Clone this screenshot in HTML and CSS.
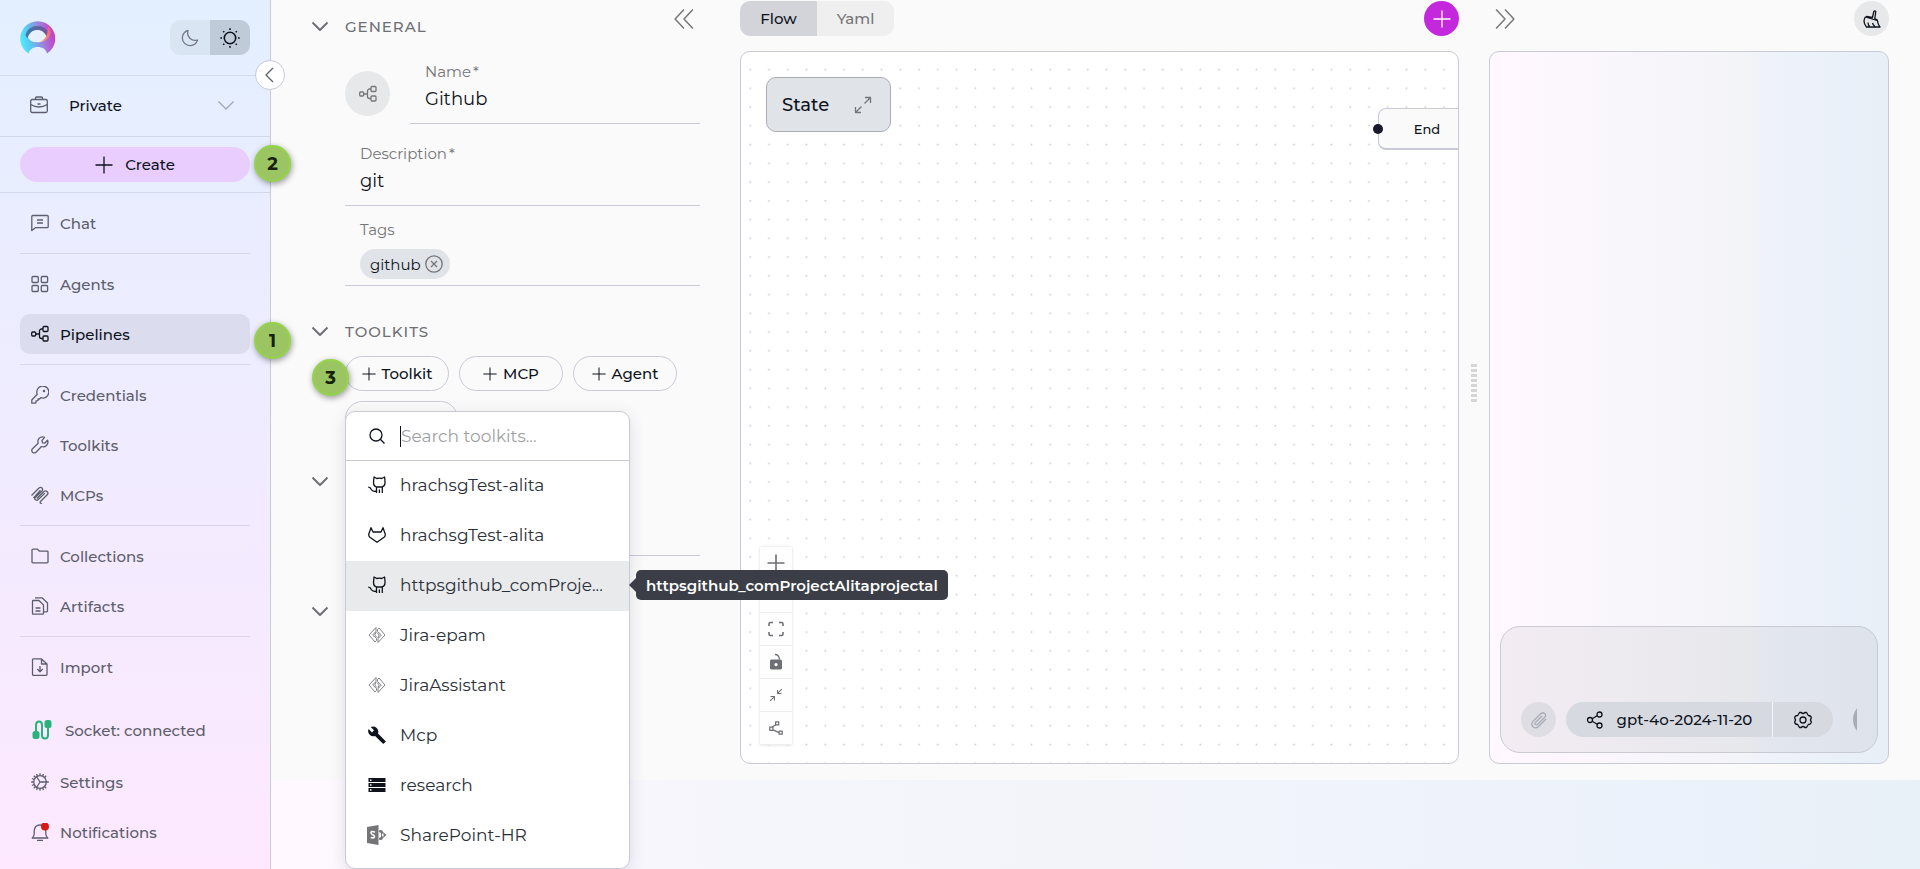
FILE: index.html
```html
<!DOCTYPE html>
<html lang="en">
  <head>
    <meta charset="UTF-8" />
    <meta name="viewport" content="width=device-width, initial-scale=1.0" />
    <title>Pipelines - Github</title>
    <link rel="stylesheet" href="styles.css">
  </head>
  <body>
    <!-- icon sprite -->
    <svg class="sprite" aria-hidden="true">
      <symbol id="i-chevron" viewBox="0 0 18 18"><path d="M1.500 5.500L9 13l7.500-7.500" /></symbol>
      <symbol id="i-plus" viewBox="0 0 18 18"><path d="M9 .5v17M.5 9h17" /></symbol>
      <symbol id="i-double" viewBox="0 0 18 18"><path d="M9 .5L1 9l8 8.500M17 .5L9 9l8 8.500" /></symbol>
      <symbol id="i-flow" viewBox="0 0 18 18">
        <rect x=".7" y="7" width="4" height="4" rx="1" /><rect x="12" y="1.500" width="5" height="5" rx="1" /><rect x="12" y="11" width="5" height="5" rx="1" />
        <path d="M4.700 9h3.800M12 4h-1.500a2 2 0 0 0-2 2v5.500a2 2 0 0 0 2 2H12" />
      </symbol>
      <symbol id="i-tool-cat" viewBox="0 0 18 18">
        <path d="M6 1l2.700 1.500q2.800-.6 5 0L16.600 1l.4 4.500q.4 4.500-3.200 5.500H8.500Q5 10 5.600 5.500zM8.500 11v6M14.300 11v6M11.400 13.500V17M8.500 15q-4 1-5.200-1.500-.8-2-3-2.300" />
      </symbol>
      <symbol id="i-fox" viewBox="0 0 18 18"><path d="M3 1.700L5 6h8l2-4.300L17.200 8q.3 2-.8 3L9 16.300 1.600 11Q.5 10 .8 8z" /></symbol>
      <symbol id="i-jira" viewBox="0 0 18 18">
        <path d="M8 1.500L1 9l6 7 1.500-1.500v-2L4.700 9 8 5.300zM10 16.500L17 9l-6-7-1.500 1.500v2L13.300 9 10 12.700zM8 6L6.800 9l2 2.500M10 12l1.200-3-2-2.500" />
      </symbol>
      <symbol id="i-share" viewBox="0 0 18 18">
        <circle cx="4" cy="9" r="2.500" /><circle cx="13.500" cy="3.500" r="2.500" /><circle cx="13.500" cy="14.500" r="2.500" /><path d="M6.200 7.800l5-3M6.200 10.200l5 3" />
      </symbol>
    </svg>

    <aside class="sidebar">
      <header class="sidebar-top">
        <svg class="logo" viewBox="0 0 35 35" aria-hidden="true">
          <defs>
            <linearGradient id="ring" x1="0" y1=".7" x2="1" y2=".5">
              <stop offset="0" stop-color="#4df0ff" /><stop offset=".3" stop-color="#5cc4f0" /><stop offset=".65" stop-color="#a07ddc" /><stop offset="1" stop-color="#c83bc4" />
            </linearGradient>
            <linearGradient id="shade" x1="0" y1="0" x2="1" y2="0">
              <stop offset="0" stop-color="#3a7fa8" /><stop offset="1" stop-color="#7c4f9c" />
            </linearGradient>
            <linearGradient id="flare" x1="0" y1="1" x2="1" y2="0">
              <stop offset="0" stop-color="#ffb25c" /><stop offset="1" stop-color="#f0528c" />
            </linearGradient>
          </defs>
          <path fill="url(#ring)" d="M8.500 33.500A17.500 17.500 0 1 1 27 33.500C26 29 22 27 17.700 27S10 29 8.500 33.500z" />
          <ellipse cx="17.500" cy="16" rx="10" ry="6.300" fill="#e6f0ff" />
          <path fill="url(#shade)" d="M5.500 15.500C7 8.500 12 6 17.500 6S28 8.500 28.500 15.500L27 17.500c-2-5-5-7.500-9.500-7.500S9 12.500 7.500 18.500z" />
          <path fill="url(#flare)" d="M18 22.300c7-1 10-7 10-16 2.500 2 3 4 2.800 6C30 18.500 24 22.500 18 22.300z" />
        </svg>
        <div class="theme" role="group" aria-label="Theme">
          <button type="button" aria-label="Dark">
            <svg class="icon" viewBox="0 0 18 18"><path d="M7 1.500A7.700 7.700 0 1 0 16.500 11 7.500 7.500 0 0 1 7 1.500z" /></svg>
          </button>
          <button type="button" class="on" aria-label="Light">
            <svg class="icon icon-20 bold" viewBox="0 0 20 20"><circle cx="10" cy="10" r="5.700" /><path d="M10 .3v1.700M10 18v1.700M.3 10H2M18 10h1.700M3.200 3.200l1.100 1.100M15.700 15.700l1.100 1.100M3.200 16.800l1.100-1.100M15.700 4.300l1.100-1.100" /></svg>
          </button>
        </div>
        <button type="button" class="collapse" aria-label="Collapse sidebar">
          <svg class="icon" viewBox="0 0 18 18"><path d="M12 2L5 9l7 7" /></svg>
        </button>
      </header>

      <button type="button" class="project">
        <svg class="icon" viewBox="0 0 18 18"><rect x=".7" y="3.500" width="16.600" height="13" rx="1.500" /><path d="M5.500 3.500V2q0-1 1-1h5q1 0 1 1v1.500M.7 8.500Q9 13.500 17.300 8.500M7.500 8h3" /></svg>
        <span>Private</span>
        <svg class="icon faded"><use href="#i-chevron" /></svg>
      </button>

      <div class="create-row">
        <button type="button" class="create"><svg class="icon"><use href="#i-plus" /></svg>Create</button>
        <span class="step">2</span>
      </div>

      <nav class="menu">
        <a href="#chat"><svg class="icon" viewBox="0 0 18 18"><path d="M.8 16.500v-14q0-1 1-1h14.400q1 0 1 1v10.200q0 1-1 1H4.500zM6 6h6M6 9h6" /></svg>Chat</a>
        <hr>
        <a href="#agents"><svg class="icon" viewBox="0 0 18 18"><rect x="1" y="1.500" width="6.300" height="6" rx="1" /><rect x="10.300" y="1.500" width="6.300" height="6" rx="1" /><rect x="1" y="10.500" width="6.300" height="6" rx="1" /><rect x="10.300" y="10.500" width="6.300" height="6" rx="1" /></svg>Agents</a>
        <a href="#pipelines" class="active"><svg class="icon"><use href="#i-flow" /></svg>Pipelines<span class="step step-side">1</span></a>
        <hr>
        <a href="#credentials"><svg class="icon" viewBox="0 0 18 18"><path d="M.8 14L6.200 8.200A6 6 0 1 1 9.800 11.700L8.500 13H7v1.500L5.500 15H5v1.500l-.7.700H.8z" /><circle cx="13" cy="5" r=".6" /></svg>Credentials</a>
        <a href="#toolkits"><svg class="icon" viewBox="0 0 18 18"><path d="M13.500 1.300q-3-1.300-5.300.9-2 2.200-1 5L1.500 12.700q-1.500 1.800 0 3.500 1.700 1.500 3.500 0l5.500-5.700q3 1 5-1 2.200-2.500 1.100-5.300l-3 3-2-.4-.7-2.200z" /></svg>Toolkits</a>
        <a href="#mcps"><svg class="icon" viewBox="0 0 18 18"><path d="M.5 9.500L8 2q1.700-1.300 3 0t0 3L4.500 11.300M5.800 12.500L13 5.500q1.700-1.200 3.200.2t0 3.100L9.500 15.500q-.8 1 0 1.500l1.500 1.200M4.500 11.300q-1.500 1.500 0 2.500t2.500 0l7-6.700M2.500 12L9.500 4.300" /></svg>MCPs</a>
        <hr>
        <a href="#collections"><svg class="icon" viewBox="0 0 18 18"><path d="M1 3q0-.8.800-.8h4.700l2 2h7.700q.8 0 .8.8v10q0 .8-.8.8H1.800q-.8 0-.8-.8z" /></svg>Collections</a>
        <a href="#artifacts"><svg class="icon" viewBox="0 0 18 18"><path d="M1.500 4.300q0-.8.800-.8H8l4.500 4.500v8.400q0 .8-.8.800H2.300q-.8 0-.8-.8zM4 .8h7L16.500 6v8q0 .8-.8.8h-3M4.500 11h5M4.500 14h5" /></svg>Artifacts</a>
        <hr>
        <a href="#import"><svg class="icon" viewBox="0 0 18 18"><path d="M1.500 1.700q0-.8.800-.8h8.200l5.500 5v10.600q0 .8-.8.800H2.300q-.8 0-.8-.8zM10.500.8V6H16M9 8v5.500M6.300 11L9 13.800l2.700-2.800" /></svg>Import</a>
      </nav>

      <div class="menu menu-bottom">
        <p class="socket">
          <svg class="icon icon-20" viewBox="0 0 20 20"><path d="M4 15V5q0-3.500 3-3.500T10 5v10q0 3.500 3 3.500t3-3.500V5" /><rect x="1.500" y="12" width="5" height="6" rx="1.500" /><rect x="13.500" y="1" width="5" height="6" rx="1.500" /></svg>
          Socket: connected
        </p>
        <a href="#settings"><svg class="icon" viewBox="0 0 18 18"><circle cx="9" cy="9" r="6.300" /><path d="M9 .2v2.500M9 15.300v2.500M.2 9h2.500M8.500 9h9.300M2.800 2.800l1.700 1.700M13.500 13.500l1.700 1.700M2.800 15.200l1.700-1.700M13.500 4.500l1.700-1.700M9 9L5.500 3.500M9 9l-3.500 5.500M5.500.9l1 2.300M11.500 14.800l1 2.300M.9 5.500l2.300 1M.9 12.500l2.300-1M12.500.9l-1 2.300M5.500 17.100l1-2.300" /></svg>Settings</a>
        <a href="#notifications"><svg class="icon" viewBox="0 0 18 18"><path d="M1.200 15q2-1.500 2-4.500V8Q3.500 2 9 2t5.800 6v2.500q0 3 2 4.500zM6 17.300h6" /><circle class="alert" cx="14" cy="3.500" r="4" /></svg>Notifications</a>
      </div>
    </aside>

    <main class="workspace">
      <section class="settings">
        <button type="button" class="ghost fold" aria-label="Collapse settings"><svg class="icon icon-20"><use href="#i-double" /></svg></button>

        <button type="button" class="heading"><svg class="icon"><use href="#i-chevron" /></svg>GENERAL</button>
        <div class="fields">
          <div class="name-row">
            <span class="avatar"><svg class="icon"><use href="#i-flow" /></svg></span>
            <div class="field">
              <label for="name">Name <i>*</i></label>
              <input id="name" type="text" value="Github">
            </div>
          </div>
          <div class="field">
            <label for="description">Description <i>*</i></label>
            <input id="description" type="text" value="git">
          </div>
          <div class="field field-tags">
            <span class="label">Tags</span>
            <span class="tag">github<button type="button" aria-label="Remove github"><svg class="icon" viewBox="0 0 18 18"><circle cx="9" cy="9" r="8.200" /><path d="M6 6l6 6M12 6l-6 6" /></svg></button></span>
          </div>
        </div>

        <button type="button" class="heading"><svg class="icon"><use href="#i-chevron" /></svg>TOOLKITS</button>
        <div class="fields add-row">
          <button type="button" class="add"><svg class="icon icon-14"><use href="#i-plus" /></svg>Toolkit</button>
          <button type="button" class="add"><svg class="icon icon-14"><use href="#i-plus" /></svg>MCP</button>
          <button type="button" class="add"><svg class="icon icon-14"><use href="#i-plus" /></svg>Agent</button>
          <button type="button" class="add add-wide" aria-label="Pipeline"></button>
          <span class="step step-toolkit">3</span>

          <div class="picker">
            <label class="search">
              <svg class="icon" viewBox="0 0 18 18"><circle cx="8" cy="8" r="6" /><path d="M12.300 12.300L16.500 16.500" /></svg>
              <input type="text" placeholder="Search toolkits..." aria-label="Search toolkits">
            </label>
            <ul>
              <li><svg class="icon"><use href="#i-tool-cat" /></svg><span>hrachsgTest-alita</span></li>
              <li><svg class="icon"><use href="#i-fox" /></svg><span>hrachsgTest-alita</span></li>
              <li class="hover">
                <svg class="icon"><use href="#i-tool-cat" /></svg><span>httpsgithub_comProje...</span>
                <div class="tooltip" role="tooltip">httpsgithub_comProjectAlitaprojectal</div>
              </li>
              <li><svg class="icon thin muted"><use href="#i-jira" /></svg><span>Jira-epam</span></li>
              <li><svg class="icon thin muted"><use href="#i-jira" /></svg><span>JiraAssistant</span></li>
              <li><svg class="icon solid" viewBox="0 0 18 18"><path d="M17.700 15.200L10 7.500q1-3.200-1.300-5.500Q6-.3 2.700 1L6 4.300 4 6.400.6 3Q-.8 6.200 1.700 8.800q2.300 2.200 5.400 1.200l7.700 7.600q.5.500 1 0l2-1.800q.5-.4-.1-.6z" /></svg><span>Mcp</span></li>
              <li><svg class="icon solid" viewBox="0 0 18 18"><path d="M.5 2h17v4H.5zM.5 7h17v4H.5zM.5 12h17v4H.5z" /><path class="hole" d="M2 3.500h1.500V5H2zM2 8.300h1.500v1.500H2zM2 13.200h1.500v1.500H2z" /></svg><span>research</span></li>
              <li>
                <svg class="icon icon-20 solid muted" viewBox="0 0 20 20"><path d="M0 2l11.500-2v20L0 18zM12 5.500q3.500-1.500 4 1.500l3.500 3-3.500 3q-.5 3-4 1.500v-1.500l2-1v-4l-2-1z" /><path class="hole" d="M15 8.500h1.500v3H15z" /><path class="sharp" d="M8 7.200q-3.800-1.500-4 .5 0 1.300 1.800 2t1.700 2q-.3 1.800-3.800.8" /></svg>
                <span>SharePoint-HR</span>
              </li>
            </ul>
          </div>
        </div>

        <button type="button" class="heading" aria-label="Welcome message"><svg class="icon"><use href="#i-chevron" /></svg></button>
        <div class="message-line"></div>
        <button type="button" class="heading" aria-label="Conversation starters"><svg class="icon"><use href="#i-chevron" /></svg></button>
      </section>

      <section class="editor">
        <div class="bar">
          <div class="tabs">
            <button type="button" class="on">Flow</button>
            <button type="button">Yaml</button>
          </div>
          <button type="button" class="round accent" aria-label="Add node"><svg class="icon"><use href="#i-plus" /></svg></button>
        </div>
        <div class="canvas">
          <svg class="dots" aria-hidden="true">
            <defs>
              <pattern id="grid" x="0" y="8" width="18.750" height="18.750" patternUnits="userSpaceOnUse"><circle cx="9.300" cy="9.500" r=".9" /></pattern>
            </defs>
            <rect width="100%" height="100%" fill="url(#grid)" />
          </svg>
          <button type="button" class="state">State
            <svg class="icon" viewBox="0 0 18 18"><path d="M10.500 7.500L16.500 1.500M11 1.500h5.500V7M7.500 10.500L1.500 16.500M1.500 11v5.500H7" /></svg>
          </button>
          <div class="node-end">End</div>
          <div class="controls">
            <button type="button" aria-label="Zoom in"><svg class="icon bold"><use href="#i-plus" /></svg></button>
            <button type="button" aria-label="Zoom out"></button>
            <button type="button" aria-label="Fit view"><svg class="icon bold" viewBox="0 0 18 18"><path d="M2 6V4q0-1.500 1.500-1.500H6M12 2.500h2.500Q16 2.500 16 4v2M16 12v2q0 1.500-1.500 1.500H12M6 15.500H3.500Q2 15.500 2 14v-2" /></svg></button>
            <button type="button" aria-label="Lock"><svg class="icon" viewBox="0 0 18 18"><path d="M8 1.500q4 0 4.500 5" /><path class="fill" fill-rule="evenodd" d="M3 8q0-1.500 1.500-1.500h9Q15 6.500 15 8v7q0 1.500-1.500 1.500h-9Q3 16.500 3 15zM9 10a1.600 1.600 0 1 0 .1 0z" /></svg></button>
            <button type="button" aria-label="Collapse nodes"><svg class="icon icon-14" viewBox="0 0 18 18"><path d="M16.500 1.500L11 7M11 2.500V7h5M1.500 16.500L7 11M2 11h5v5" /></svg></button>
            <button type="button" aria-label="Layout"><svg class="icon icon-14 bold" viewBox="0 0 18 18"><rect x="8.500" y="1" width="4" height="4" /><rect x="1" y="8" width="4" height="4" /><rect x="13" y="13" width="4" height="4" /><path d="M4 8l5-3.500M5 11.500l8 3.500" /></svg></button>
          </div>
        </div>
      </section>

      <div class="resizer" aria-hidden="true"></div>

      <section class="chat">
        <div class="bar">
          <button type="button" class="ghost flip" aria-label="Collapse chat"><svg class="icon icon-20"><use href="#i-double" /></svg></button>
          <button type="button" class="round" aria-label="Clear chat"><svg class="icon" viewBox="0 0 18 18"><path d="M9.500 7.500l1.300-6q1-1.300 2 0l-1 7 2.500 1.500q.3 4 2.700 7H3.500Q-.5 12.500 2 7.500l1.500-1zM2.500 7L14 10.500M5 12.500q0 2 1.500 4M9.500 13q.5 2 2.500 3.500" /></svg></button>
        </div>
        <div class="conversation">
          <div class="composer">
            <div class="composer-row">
              <button type="button" class="attach" aria-label="Attach file"><svg class="icon" viewBox="0 0 18 18"><path d="M16 8l-7.500 7.500q-3 2.500-5.500.3-2.500-2.600 0-5.500L11 2.500q2-1.500 3.700 0t0 3.700L7.500 13.500q-1 .7-2 0t0-2L12 5" /></svg></button>
              <div class="model">
                <button type="button" class="model-name"><svg class="icon"><use href="#i-share" /></svg>gpt-4o-2024-11-20</button>
                <button type="button" class="model-settings" aria-label="Model settings"><svg class="icon" viewBox="0 0 18 18"><circle cx="9" cy="9" r="3" /><path d="M5.500 1.500h1.700Q9 3.500 10.800 1.500h1.700l1.800 3q2.700.2 2.900 1.800v1.200q-1.500 1.500 0 3v1.200q-.4 1.700-2.900 1.800l-1.800 3h-1.700Q9 14.500 7.200 16.500H5.500l-1.800-3Q1 13.300.8 11.700v-1.200q1.500-1.500 0-3V6.300Q1 4.600 3.700 4.500z" /></svg></button>
              </div>
              <button type="button" class="send" aria-label="Send"></button>
            </div>
          </div>
        </div>
      </section>
    </main>
  </body>
</html>
```
FILE: styles.css
```css
* {
  box-sizing: border-box;
}
body {
  margin: 0;
  min-height: 100vh;
  display: flex;
  font-family: Montserrat, Inter, sans-serif;
  font-size: 15px;
  color: #0e131d;
  background: linear-gradient(90deg, #fff8ff 14%, #f5f5fc 40%, #f3f4fa 58%, #eff3fc 72%, #e8f0f8 100%);
}
button,
input {
  font: inherit;
  color: inherit;
  border: 0;
  padding: 0;
  background: none;
}
button {
  cursor: pointer;
  display: flex;
  align-items: center;
  justify-content: center;
}
.sprite {
  position: absolute;
  width: 0;
  height: 0;
}
.icon {
  flex: none;
  width: 18px;
  height: 18px;
  fill: none;
  stroke: currentColor;
  stroke-width: 1.3;
  stroke-linejoin: round;
}
.icon-20 {
  width: 20px;
  height: 20px;
}
.icon-14 {
  width: 14px;
  height: 14px;
}
.thin {
  stroke-width: 0.9;
}
.bold {
  stroke-width: 1.6;
}
.muted {
  color: #757578;
}
.faded {
  opacity: 0.5;
}
.solid,
.fill {
  fill: currentColor;
  stroke: none;
}
.hole {
  fill: #fff;
}
.sharp {
  fill: none;
  stroke: #fff;
  stroke-width: 1.6;
}

/* sidebar */
.sidebar {
  flex: none;
  width: 271px;
  display: flex;
  flex-direction: column;
  color: #5c5e6b;
  background: linear-gradient(180deg, #e3efff, #fde8ff);
  border-right: 1px solid #c9cad8;
}
.sidebar-top {
  position: relative;
  display: flex;
  align-items: center;
  justify-content: space-between;
  height: 76px;
  padding: 0 20px;
  border-bottom: 1px solid #d0dcec;
}
.logo {
  width: 35px;
  height: 35px;
}
.theme {
  display: flex;
  border-radius: 10px;
  overflow: hidden;
  background: #dae5f4;
}
.theme button {
  width: 40px;
  height: 35px;
  color: #757a88;
}
.theme .on {
  color: #0e131d;
  background: #c0cbda;
}
.collapse {
  position: absolute;
  right: -15px;
  bottom: -15px;
  z-index: 2;
  width: 30px;
  height: 30px;
  border: 1px solid #c9cad8;
  border-radius: 50%;
  background: #fff;
}
.project {
  height: 61px;
  padding: 0 35px 2px 30px;
  gap: 21px;
  border-bottom: 1px solid #d0d8ea;
}
.project span {
  flex: 1;
  text-align: left;
  color: #0e131d;
  font-weight: 500;
}
.create-row {
  position: relative;
  padding: 10px 20px;
  border-bottom: 1px solid #d0d8ea;
}
.create {
  width: 100%;
  height: 35px;
  gap: 12px;
  border-radius: 18px;
  color: #0e131d;
  font-weight: 500;
  background: #eacdff;
}
.menu {
  display: flex;
  flex-direction: column;
  gap: 10px;
  padding: 10px 20px;
}
.menu a,
.socket {
  position: relative;
  display: flex;
  align-items: center;
  gap: 11px;
  height: 40px;
  margin: 0;
  padding: 0 11px;
  border-radius: 10px;
  color: inherit;
  font-weight: 500;
  text-decoration: none;
}
.menu .active {
  color: #0e131d;
  background: #dbdcee;
}
.menu hr {
  width: 100%;
  margin: 0;
  border: 0;
  border-top: 1px solid #dad6e8;
}
.menu-bottom {
  margin-top: auto;
  padding-bottom: 17px;
}
.menu .socket {
  gap: 13px;
  margin-bottom: 2px;
  padding-left: 12px;
}
.socket .icon {
  color: #2ab27b;
  stroke-width: 2;
}
.socket rect {
  fill: currentColor;
}
.alert {
  fill: #d71616;
  stroke: none;
}

/* numbered markers */
.step {
  position: absolute;
  right: -21px;
  top: 8px;
  z-index: 3;
  display: flex;
  align-items: center;
  justify-content: center;
  width: 37px;
  height: 37px;
  border: 2px solid #94d448;
  border-radius: 50%;
  color: #16200c;
  font-size: 18px;
  font-weight: 700;
  background: #9bc563;
  box-shadow: 1px 2px 6px rgba(0, 0, 0, 0.4);
}
.step-side {
  right: -41px;
}
.step-toolkit {
  left: -33px;
  top: 3px;
}

/* workspace */
.workspace {
  flex: 1;
  min-width: 0;
  display: flex;
  margin-bottom: 89px;
  padding: 1px 31px 16px 40px;
  background: #fafafa;
}
.bar {
  display: flex;
  align-items: center;
  justify-content: space-between;
  height: 35px;
  margin-bottom: 15px;
}
.ghost {
  width: 33px;
  height: 35px;
  color: #757578;
}
.round {
  width: 35px;
  height: 35px;
  border-radius: 50%;
  background: #e7e8ea;
}
.accent {
  color: #fff;
  background: #c428dd;
}

/* settings form */
.settings {
  position: relative;
  z-index: 1;
  flex: none;
  width: 389px;
}
.fold {
  position: absolute;
  top: 0;
  right: 0;
}
.heading {
  gap: 16px;
  height: 50px;
  color: #6e6f75;
  font-weight: 500;
  letter-spacing: 1px;
}
.heading .icon {
  stroke-width: 2;
}
.fields {
  padding-left: 34px;
}
.name-row {
  display: flex;
  align-items: center;
  gap: 20px;
}
.name-row .field {
  flex: 1;
}
.avatar {
  display: flex;
  align-items: center;
  justify-content: center;
  width: 45px;
  height: 45px;
  margin-top: 12px;
  border-radius: 50%;
  color: #757578;
  background: #e7e8ea;
}
.field {
  display: flex;
  flex-direction: column;
  height: 82px;
  padding: 20px 15px 0;
  border-bottom: 1px solid #c9cad8;
}
.name-row .field {
  height: 73px;
  padding-top: 11px;
}
.field label,
.label {
  line-height: 20px;
  color: #757578;
}
.field i {
  margin-left: -2px;
  font-style: normal;
}
.field input {
  height: 34px;
  font-size: 18px;
  outline: 0;
}
.field-tags {
  height: 80px;
  padding-top: 14px;
  align-items: flex-start;
}
.tag {
  display: flex;
  align-items: center;
  gap: 4px;
  height: 30px;
  margin-top: 9px;
  padding: 0 7px 0 10px;
  border-radius: 15px;
  background: #e0e3e8;
}
.tag button {
  color: #757578;
}
.fields + .heading {
  margin-top: 20px;
}
.add-row {
  position: relative;
  display: flex;
  flex-wrap: wrap;
  gap: 10px;
  margin-left: 34px;
  padding-left: 0;
}
.add {
  width: 104px;
  height: 35px;
  gap: 6px;
  border: 1px solid #c9cad8;
  border-radius: 18px;
  font-weight: 500;
}
.add-wide {
  width: 113px;
}
.message-line {
  height: 50px;
  margin: 0 0 30px 34px;
  border-bottom: 1px solid #c9cad8;
}

/* toolkit picker */
.picker {
  position: absolute;
  top: 55px;
  left: 0;
  z-index: 2;
  width: 285px;
  padding-bottom: 7px;
  border: 1px solid #c9cad8;
  border-radius: 10px;
  background: #fff;
  box-shadow: 0 4px 16px rgba(60, 60, 90, 0.15);
}
.search {
  display: flex;
  align-items: center;
  gap: 14px;
  height: 49px;
  padding: 0 22px;
  border-bottom: 1px solid #c9cad8;
}
.search input {
  flex: 1;
  min-width: 0;
  height: 21px;
  border-left: 1px solid #0e131d;
  font-size: 17px;
  outline: 0;
}
.search input::placeholder {
  color: #a0a0a4;
}
.picker ul {
  margin: 0;
  padding: 0;
  list-style: none;
}
.picker li {
  position: relative;
  display: flex;
  align-items: center;
  gap: 14px;
  height: 50px;
  padding: 0 20px 2px 22px;
  color: #2b2f39;
  font-size: 17px;
  white-space: nowrap;
}
.picker li .icon:not(.muted) {
  color: #0e131d;
}
.picker li > .icon-20 {
  margin: 0 -1px;
}
.picker .hover {
  background: #e9eaeb;
}
.tooltip {
  position: absolute;
  left: calc(100% + 7px);
  top: 9px;
  display: flex;
  align-items: center;
  height: 30px;
  padding: 0 10px;
  border-radius: 5px;
  color: #fff;
  font-size: 15px;
  font-weight: 600;
  background: #3b3e46;
}
.tooltip::before {
  content: "";
  position: absolute;
  left: -7px;
  top: 8px;
  border: 7px solid transparent;
  border-left: 0;
  border-right-color: #3b3e46;
}

/* flow editor */
.editor {
  flex: 1;
  min-width: 0;
  display: flex;
  flex-direction: column;
  margin-left: 40px;
}
.tabs {
  display: flex;
  border-radius: 10px;
  overflow: hidden;
  background: #efefef;
}
.tabs button {
  width: 77px;
  height: 35px;
  color: #757578;
  font-weight: 500;
}
.tabs .on {
  color: #0e131d;
  background: #d3d4d9;
}
.canvas {
  position: relative;
  flex: 1;
  overflow: hidden;
  border: 1px solid #c9cad8;
  border-radius: 10px;
  background: #fff;
}
.dots {
  display: block;
  position: absolute;
  width: 100%;
  height: 100%;
  fill: #cacad0;
}
.state {
  position: absolute;
  left: 25px;
  top: 25px;
  width: 125px;
  height: 55px;
  justify-content: space-between;
  padding: 0 18px 0 15px;
  border: 1px solid #a9acb5;
  border-radius: 10px;
  font-size: 18px;
  font-weight: 500;
  background: #e0e3e8;
}
.state .icon {
  color: #757578;
}
.node-end {
  position: absolute;
  right: -18px;
  top: 56px;
  width: 98px;
  height: 42px;
  border: 1px solid #c9cad8;
  border-bottom-width: 2px;
  border-radius: 8px;
  font-size: 13px;
  font-weight: 500;
  line-height: 40px;
  text-align: center;
  background: #fafafa;
}
.node-end::before {
  content: "";
  position: absolute;
  left: -6px;
  top: 15px;
  width: 10px;
  height: 10px;
  border-radius: 50%;
  background: #1a1a2e;
}
.controls {
  position: absolute;
  left: 19px;
  bottom: 18px;
  width: 32px;
  background: #fefefe;
  box-shadow: 0 0 3px rgba(0, 0, 0, 0.15);
}
.controls button {
  width: 100%;
  height: 33px;
  color: #6e6f75;
  border-bottom: 1px solid #eee;
}
.resizer {
  flex: none;
  align-self: center;
  width: 6px;
  height: 38px;
  margin: 0 12px;
  background: repeating-linear-gradient(#d6d6d8 0 3px, transparent 3px 5px);
}

/* chat */
.chat {
  flex: none;
  width: 400px;
  display: flex;
  flex-direction: column;
}
.flip {
  transform: scaleX(-1);
}
.conversation {
  flex: 1;
  display: flex;
  flex-direction: column;
  justify-content: flex-end;
  padding: 10px;
  border: 1px solid #c9cad8;
  border-radius: 10px;
  background: linear-gradient(90deg, #fff8ff, #f3f4f8 65%, #eef2fb 70%, #e8eff7);
}
.composer {
  display: flex;
  align-items: flex-end;
  height: 127px;
  padding: 15px 20px;
  border: 1px solid #c9cad2;
  border-radius: 20px;
  background: rgba(14, 19, 29, 0.05);
}
.composer-row {
  flex: 1;
  display: flex;
  overflow: hidden;
}
.composer-row > * {
  flex: none;
}
.attach,
.send {
  width: 35px;
  height: 35px;
  border-radius: 50%;
}
.attach {
  margin-right: 10px;
  color: #a9acb5;
  background: #dfdde4;
}
.send {
  margin-left: 20px;
  background: #a9acb5;
}
.model {
  display: flex;
  border-radius: 18px;
  overflow: hidden;
  font-weight: 500;
  background: #d7d9e0;
}
.model-name {
  width: 207px;
  height: 35px;
  gap: 13px;
  border-right: 1px solid #f3f4f8;
}
.model-settings {
  width: 60px;
}
```
